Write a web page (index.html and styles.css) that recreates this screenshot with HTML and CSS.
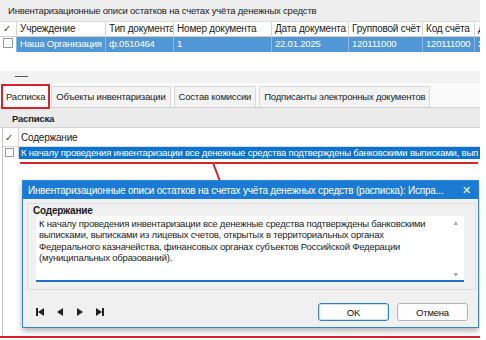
FILE: index.html
```html
<!DOCTYPE html>
<html lang="ru">
	<head>
		<meta charset="UTF-8" />
		<title>Инвентаризационные описи</title>
		<link rel="stylesheet" href="styles.css">
	</head>
	<body>
		<div class="window">
			<div class="caption">Инвентаризационные описи остатков на счетах учёта денежных средств</div>

			<div class="grid">
				<div class="grid-row head">
					<div class="cell chk">✓</div>
					<div class="cell c-org">Учреждение</div>
					<div class="cell c-type">Тип документа</div>
					<div class="cell c-num">Номер документа</div>
					<div class="cell c-date">Дата документа</div>
					<div class="cell c-group">Групповой счёт</div>
					<div class="cell c-code">Код счёта</div>
					<div class="cell c-rest">Д</div>
				</div>
				<div class="grid-row sel">
					<div class="cell chk"><span class="box"></span></div>
					<div class="cell c-org">Наша Организация</div>
					<div class="cell c-type">ф.0510464</div>
					<div class="cell c-num">1</div>
					<div class="cell c-date">22.01.2025</div>
					<div class="cell c-group">120111000</div>
					<div class="cell c-code">120111000</div>
					<div class="cell c-rest">2</div>
				</div>
			</div>

			<div class="splitter"><span class="grip"></span></div>

			<div class="tabs">
				<div class="tab active">Расписка</div>
				<div class="tab">Объекты инвентаризации</div>
				<div class="tab">Состав комиссии</div>
				<div class="tab">Подписанты электронных документов</div>
			</div>

			<div class="panel-head">Расписка</div>

			<div class="list">
				<div class="list-row head">
					<span class="list-chk">✓</span>
					<span class="list-text">Содержание</span>
				</div>
				<div class="list-row sel">
					<span class="list-chk"><span class="box"></span></span>
					<span class="list-text">К началу проведения инвентаризации все денежные средства подтверждены банковскими выписками, вып</span>
				</div>
				<div class="underline"></div>
			</div>

			<svg class="arrow" width="40" height="60" viewBox="0 0 40 60">
				<line x1="4" y1="2" x2="21" y2="46" stroke="#d8232f" stroke-width="2" />
				<polygon points="24,54 16,43 26,40" fill="#d8232f" />
			</svg>

			<div class="dialog">
				<div class="dialog-title">
					<span class="dialog-caption">Инвентаризационные описи остатков на счетах учёта денежных средств (расписка): Испра...</span>
					<span class="dialog-close">✕</span>
				</div>
				<div class="dialog-body">
					<div class="group">
						<div class="group-label">Содержание</div>
						<div class="memo">
							<div class="memo-text">К началу проведения инвентаризации все денежные средства подтверждены банковскими<br>выписками, выписками из лицевых счетов, открытых в территориальных органах<br>Федерального казначейства, финансовых органах субъектов Российской Федерации<br>(муниципальных образований).</div>
							<div class="memo-scroll">
								<span>▲</span>
								<span>▼</span>
							</div>
						</div>
					</div>
					<div class="dialog-footer">
						<div class="nav">
							<svg width="9" height="8" viewBox="0 0 9 8"><rect x="0" y="0" width="2" height="8" fill="#222" /><polygon points="2,4 8,0 8,8" fill="#222" /></svg>
							<svg width="7" height="8" viewBox="0 0 7 8"><polygon points="0,4 6,0 6,8" fill="#222" /></svg>
							<svg width="7" height="8" viewBox="0 0 7 8"><polygon points="7,4 1,0 1,8" fill="#222" /></svg>
							<svg width="9" height="8" viewBox="0 0 9 8"><polygon points="7,4 1,0 1,8" fill="#222" /><rect x="7" y="0" width="2" height="8" fill="#222" /></svg>
						</div>
						<div class="buttons">
							<button class="btn default">OK</button>
							<button class="btn">Отмена</button>
						</div>
					</div>
				</div>
			</div>
		</div>
	</body>
</html>
```

FILE: styles.css
```css
* {
	box-sizing: border-box;
}
body {
	margin: 0;
	background: #fff;
	font-family: "Liberation Sans", Arial, sans-serif;
	font-size: 9.5px;
	letter-spacing: -0.2px;
	color: #1b1b1b;
}
.window {
	position: relative;
	width: 480px;
	height: 338px;
	border-bottom: 2px solid #d8232f;
	overflow: hidden;
	background: #fff;
}
.caption {
	height: 22px;
	line-height: 22px;
	padding: 0 8px;
	background: #eeeeee;
	border-bottom: 1px solid #dddddd;
	white-space: nowrap;
}
.grid-row {
	display: flex;
	height: 15px;
	line-height: 14px;
	white-space: nowrap;
}
.grid-row.head {
	border-bottom: 1px solid #d0d0d0;
	font-size: 10px;
}
.grid-row.sel .cell {
	background: #5197d6;
	color: #fff;
	border-right-color: #8ab9e6;
}
.grid-row.sel .cell.chk {
	background: #fff;
}
.cell {
	flex: none;
	padding-left: 3px;
	border-right: 1px solid #d3d3d3;
	overflow: hidden;
}
.chk {
	width: 17px;
	padding-left: 3px;
	color: #444;
}
.box {
	display: inline-block;
	width: 10px;
	height: 10px;
	border: 1px solid #9a9a9a;
	background: #fff;
	vertical-align: -1px;
}
.c-org { width: 89px; }
.c-type { width: 68px; }
.c-num { width: 98px; }
.c-date { width: 77px; }
.c-group { width: 74px; }
.c-code { width: 52px; }
.c-rest { flex: 1; border-right: none; }

.splitter {
	margin-top: 19px;
	height: 12px;
	background: #f2f2f2;
	padding: 5px 0 0 15px;
}
.grip {
	display: block;
	width: 13px;
	height: 1px;
	background: #555;
}
.tabs {
	display: flex;
	gap: 3px;
	height: 25px;
	padding: 3px 0 0 3px;
	background: #fafafa;
	border-bottom: 1px solid #cfcfcf;
	white-space: nowrap;
}
.tab {
	padding: 0 4px;
	line-height: 20px;
	height: 21px;
	background: #f3f3f3;
	border: 1px solid #d9d9d9;
	border-bottom: none;
}
.tab.active {
	padding: 0 2px;
	background: #fff;
	outline: 2px solid #d8232f;
	border-color: #fff;
}
.panel-head {
	height: 20px;
	line-height: 21px;
	padding-left: 12px;
	font-weight: bold;
	background: #ebebeb;
	border-bottom: 1px solid #d6d6d6;
}
.list {
	position: relative;
	border-left: 1px solid #c6c6c6;
	margin-left: 2px;
	height: 210px;
}
.list-row {
	display: flex;
	white-space: nowrap;
}
.list-row.head {
	height: 19px;
	line-height: 20px;
	font-size: 10px;
	border-bottom: 1px solid #dcdcdc;
}
.list-row.sel {
	height: 12px;
	line-height: 12px;
}
.list-chk {
	flex: none;
	width: 16px;
	padding-left: 2px;
	border-right: 1px solid #d6d6d6;
	color: #444;
}
.list-row.sel .box {
	vertical-align: 0;
	height: 9px;
	width: 9px;
	margin-top: 1px;
}
.list-text {
	padding-left: 2px;
}
.list-row.sel .list-text {
	flex: 1;
	background: #0a74d2;
	color: #fff;
	overflow: hidden;
}
.underline {
	margin: 3px 0 0 17px;
	width: 458px;
	height: 2px;
	background: #d8232f;
}

.arrow {
	position: absolute;
	left: 209px;
	top: 161px;
}

.dialog {
	position: absolute;
	left: 22px;
	top: 180px;
	width: 457px;
	height: 148px;
	background: #f0f0f0;
	border: 1px solid #2f86d6;
	box-shadow: 0 3px 6px rgba(0, 0, 0, 0.3);
}
.dialog-title {
	display: flex;
	align-items: center;
	height: 18px;
	padding: 0 7px 0 5px;
	background: #1b7bd4;
	color: #fff;
	font-size: 10px;
	white-space: nowrap;
}
.dialog-caption {
	flex: 1;
	overflow: hidden;
}
.dialog-close {
	font-size: 11px;
	padding-left: 8px;
}
.dialog-body {
	padding: 4px 2px 0 4px;
}
.group {
	position: relative;
	border: 1px solid #dcdcdc;
	padding: 12px 11px 5px 8px;
	height: 87px;
}
.group-label {
	position: absolute;
	left: 5px;
	top: 1px;
	font-weight: bold;
	font-size: 10px;
	background: #f0f0f0;
}
.memo {
	display: flex;
	height: 66px;
	background: #fff;
	border-bottom: 2px solid #1f6fc6;
}
.memo-text {
	flex: 1;
	padding: 2px 0 0 3px;
	line-height: 11.3px;
	white-space: nowrap;
	overflow: hidden;
}
.memo-scroll {
	width: 17px;
	display: flex;
	flex-direction: column;
	justify-content: space-between;
	align-items: center;
	padding: 3px 0 2px;
	font-size: 7px;
	color: #a8a8a8;
}
.dialog-footer {
	display: flex;
	align-items: center;
	justify-content: space-between;
	padding: 13px 8px 0 9px;
}
.nav {
	display: flex;
	align-items: center;
	gap: 12px;
}
.buttons {
	display: flex;
	gap: 8px;
}
.btn {
	width: 71px;
	height: 18px;
	font-family: inherit;
	font-size: 9.5px;
	letter-spacing: -0.2px;
	color: #111;
	background: #fdfdfd;
	border: 1px solid #b4b4b4;
	border-radius: 3px;
}
.btn.default {
	border-color: #2f7fd1;
	box-shadow: inset 0 0 0 1px #cfe3f6;
}
```
